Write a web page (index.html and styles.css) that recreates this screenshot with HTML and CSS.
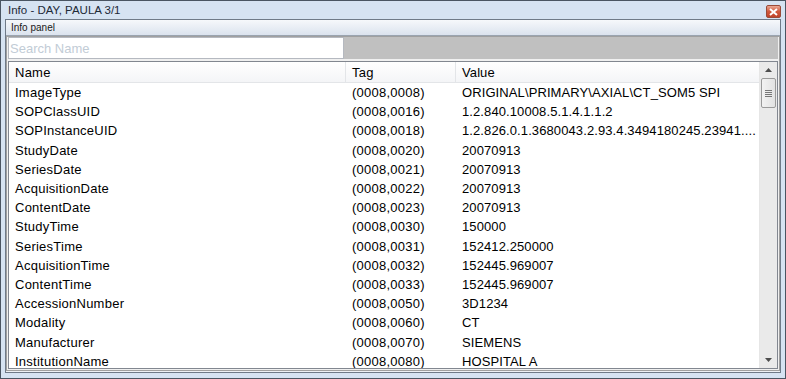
FILE: index.html
```html
<!DOCTYPE html>
<html lang="en">
<head>
    <meta charset="UTF-8">
    <title>Info - DAY, PAULA 3/1</title>
    <link rel="stylesheet" href="styles.css">
</head>
<body>
    <div class="window">
        <div class="titlebar">
            <span class="title">Info - DAY, PAULA 3/1</span>
            <span class="close">
                <svg width="9" height="8" viewBox="0 0 9 8"><path d="M1 1 L8 7 M8 1 L1 7" stroke="#fff" stroke-width="2"/></svg>
            </span>
        </div>
        <div class="client">
            <div class="panel-title">Info panel</div>
            <div class="panel-body">
                <div class="search-row">
                    <input class="search" type="text" placeholder="Search Name">
                    <div class="search-fill"></div>
                </div>
                <div class="grid">
                    <div class="grid-main">
                        <div class="row head">
                            <div class="cell c-name">Name</div>
                            <div class="cell c-tag">Tag</div>
                            <div class="cell c-value">Value</div>
                        </div>
                        <div class="row"><div class="cell c-name">ImageType</div><div class="cell c-tag">(0008,0008)</div><div class="cell c-value">ORIGINAL\PRIMARY\AXIAL\CT_SOM5 SPI</div></div>
                        <div class="row"><div class="cell c-name">SOPClassUID</div><div class="cell c-tag">(0008,0016)</div><div class="cell c-value">1.2.840.10008.5.1.4.1.1.2</div></div>
                        <div class="row"><div class="cell c-name">SOPInstanceUID</div><div class="cell c-tag">(0008,0018)</div><div class="cell c-value">1.2.826.0.1.3680043.2.93.4.3494180245.23941....</div></div>
                        <div class="row"><div class="cell c-name">StudyDate</div><div class="cell c-tag">(0008,0020)</div><div class="cell c-value">20070913</div></div>
                        <div class="row"><div class="cell c-name">SeriesDate</div><div class="cell c-tag">(0008,0021)</div><div class="cell c-value">20070913</div></div>
                        <div class="row"><div class="cell c-name">AcquisitionDate</div><div class="cell c-tag">(0008,0022)</div><div class="cell c-value">20070913</div></div>
                        <div class="row"><div class="cell c-name">ContentDate</div><div class="cell c-tag">(0008,0023)</div><div class="cell c-value">20070913</div></div>
                        <div class="row"><div class="cell c-name">StudyTime</div><div class="cell c-tag">(0008,0030)</div><div class="cell c-value">150000</div></div>
                        <div class="row"><div class="cell c-name">SeriesTime</div><div class="cell c-tag">(0008,0031)</div><div class="cell c-value">152412.250000</div></div>
                        <div class="row"><div class="cell c-name">AcquisitionTime</div><div class="cell c-tag">(0008,0032)</div><div class="cell c-value">152445.969007</div></div>
                        <div class="row"><div class="cell c-name">ContentTime</div><div class="cell c-tag">(0008,0033)</div><div class="cell c-value">152445.969007</div></div>
                        <div class="row"><div class="cell c-name">AccessionNumber</div><div class="cell c-tag">(0008,0050)</div><div class="cell c-value">3D1234</div></div>
                        <div class="row"><div class="cell c-name">Modality</div><div class="cell c-tag">(0008,0060)</div><div class="cell c-value">CT</div></div>
                        <div class="row"><div class="cell c-name">Manufacturer</div><div class="cell c-tag">(0008,0070)</div><div class="cell c-value">SIEMENS</div></div>
                        <div class="row"><div class="cell c-name">InstitutionName</div><div class="cell c-tag">(0008,0080)</div><div class="cell c-value">HOSPITAL A</div></div>
                    </div>
                    <div class="scrollbar">
                        <div class="arrow">
                            <svg width="7" height="4" viewBox="0 0 7 4"><path d="M0 4 L3.5 0 L7 4 Z" fill="#4d4d4d"/></svg>
                        </div>
                        <div class="thumb">
                            <span></span><span></span><span></span><span></span>
                        </div>
                        <div class="track"></div>
                        <div class="arrow">
                            <svg width="7" height="4" viewBox="0 0 7 4"><path d="M0 0 L7 0 L3.5 4 Z" fill="#4d4d4d"/></svg>
                        </div>
                    </div>
                </div>
            </div>
        </div>
    </div>
</body>
</html>
```

FILE: styles.css
```css
body {
    margin: 0;
    background: #ffffff;
    font-family: "Liberation Sans", Arial, sans-serif;
}
.window {
    width: 786px;
    height: 379px;
    box-sizing: border-box;
    border: 1px solid #4a5562;
    background: #d6e3f2;
    padding: 0 4px 5px 4px;
    display: flex;
    flex-direction: column;
}
.titlebar {
    height: 18px;
    display: flex;
    align-items: center;
    justify-content: space-between;
    flex-shrink: 0;
}
.title {
    font-size: 11.5px;
    color: #1e2a38;
    padding-left: 3px;
}
.close {
    width: 15px;
    height: 13px;
    margin-top: 3px;
    box-sizing: border-box;
    border: 1px solid #9a4a38;
    border-radius: 2px;
    background: linear-gradient(#eaa894, #d0583c 50%, #c0432a);
    display: flex;
    align-items: center;
    justify-content: center;
}
.client {
    flex: 1;
    display: flex;
    flex-direction: column;
    border: 1px solid #6f7a88;
    background: #eef1f5;
    min-height: 0;
}
.panel-title {
    height: 15px;
    font-size: 10px;
    line-height: 15px;
    color: #1a1a1a;
    padding-left: 5px;
    background: linear-gradient(#f6f8fb, #dbe3ee);
    border-bottom: 1px solid #9aa4b0;
    flex-shrink: 0;
}
.panel-body {
    flex: 1;
    display: flex;
    flex-direction: column;
    border: 1px solid #a0a0a0;
    margin: 0 0 1px 0;
    padding: 0 1px 1px 1px;
    background: #f0f0f0;
    min-height: 0;
}
.search-row {
    display: flex;
    height: 22px;
    flex-shrink: 0;
}
.search {
    width: 336px;
    box-sizing: border-box;
    border: 1px solid #b5b9c0;
    font-family: "Liberation Sans", Arial, sans-serif;
    font-size: 13px;
    padding: 0 1px;
    margin: 0;
    outline: none;
}
.search::placeholder {
    color: #c2ccd6;
}
.search-fill {
    flex: 1;
    background: #c0c0c0;
}
.grid {
    flex: 1;
    display: flex;
    margin-top: 2px;
    border: 1px solid #828790;
    background: #ffffff;
    min-height: 0;
    overflow: hidden;
}
.grid-main {
    flex: 1;
    overflow: hidden;
}
.row {
    display: flex;
    height: 19.2px;
    align-items: center;
    font-size: 13px;
    letter-spacing: 0.25px;
    color: #000000;
    white-space: nowrap;
}
.row.head {
    height: 20px;
    background: linear-gradient(#ffffff, #f4f5f7);
    border-bottom: 1px solid #e3e5e8;
}
.cell {
    box-sizing: border-box;
    padding-left: 6px;
    overflow: hidden;
}
.head .cell {
    height: 20px;
    line-height: 22px;
    border-right: 1px solid #e3e5e8;
}
.c-name {
    width: 337px;
}
.c-tag {
    width: 110px;
}
.c-value {
    flex: 1;
    letter-spacing: 0.1px;
}
.head .c-value {
    border-right: none;
}
.scrollbar {
    width: 17px;
    display: flex;
    flex-direction: column;
    background: #eaeaea;
    border-left: 1px solid #e6e6e6;
}
.arrow {
    height: 16px;
    display: flex;
    align-items: center;
    justify-content: center;
    flex-shrink: 0;
}
.thumb {
    height: 30px;
    margin: 0 1px;
    box-sizing: border-box;
    border: 1px solid #9a9a9a;
    border-radius: 2px;
    background: linear-gradient(90deg, #f2f2f2, #e2e2e2);
    display: flex;
    flex-direction: column;
    align-items: center;
    justify-content: center;
    gap: 1px;
    flex-shrink: 0;
}
.thumb span {
    width: 7px;
    height: 1px;
    background: #777777;
}
.track {
    flex: 1;
}
```
